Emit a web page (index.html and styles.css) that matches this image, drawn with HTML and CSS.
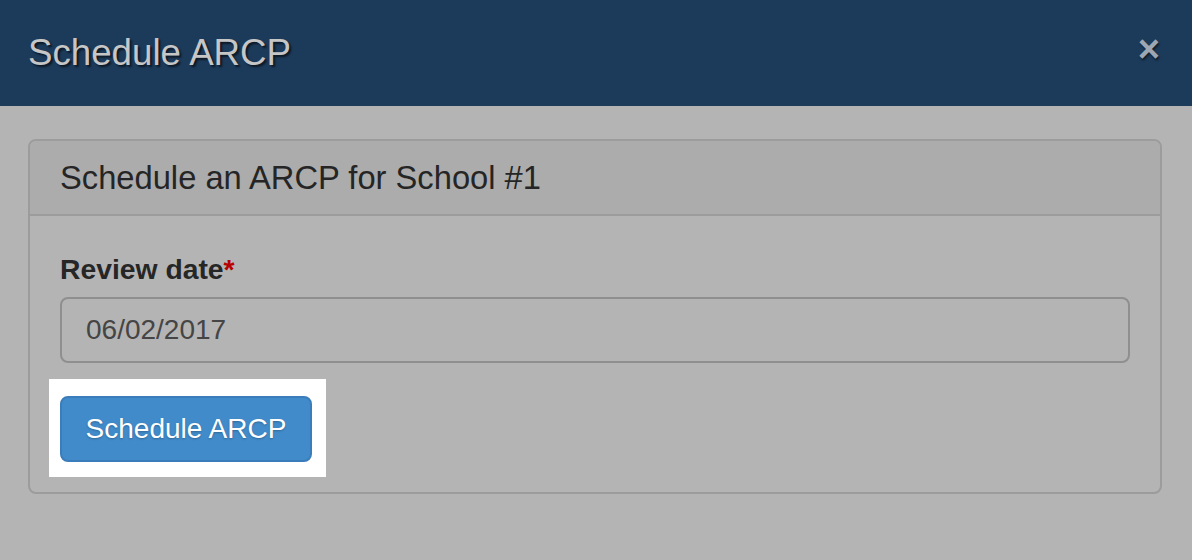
FILE: index.html
```html
<!DOCTYPE html>
<html>
<head>
<meta charset="utf-8">
<link rel="stylesheet" href="styles.css">
</head>
<body>
<div class="modal">
  <div class="modal-header">
    <h1 class="modal-title">Schedule ARCP</h1>
    <span class="close">×</span>
  </div>
  <div class="modal-body">
    <div class="panel">
      <div class="panel-heading">Schedule an ARCP for School #1</div>
      <div class="panel-body">
        <label class="field-label">Review date<span class="req">*</span></label>
        <div class="input">06/02/2017</div>
        <div class="actions">
          <span class="spotlight"><button class="btn">Schedule ARCP</button></span>
        </div>
      </div>
    </div>
  </div>
</div>
</body>
</html>
```
FILE: styles.css
```css
html, body {
  margin: 0;
  padding: 0;
}
body {
  background: #b4b4b4;
  font-family: "Liberation Sans", Arial, sans-serif;
  width: 1192px;
  height: 560px;
  overflow: hidden;
}
.modal-header {
  height: 106px;
  box-sizing: border-box;
  background: #1c3a5a;
  display: flex;
  align-items: center;
  justify-content: space-between;
  padding: 0 32px 0 28px;
}
.modal-title {
  margin: 0;
  font-size: 36.7px;
  font-weight: normal;
  color: #c6c6c6;
  text-shadow: 2px 2px 2px rgba(0,0,0,0.6);
  line-height: 40px;
  position: relative;
  top: 0;
}
.close {
  font-size: 38px;
  font-weight: bold;
  color: #9da6b2;
  text-shadow: 1px 2px 2px rgba(0,0,0,0.5);
  line-height: 40px;
  position: relative;
  top: -4px;
}
.modal-body {
  padding: 33px 30px 0 28px;
}
.panel {
  border: 2px solid #9c9c9c;
  border-radius: 8px;
}
.panel-heading {
  background: #acacac;
  border-bottom: 2px solid #9c9c9c;
  border-radius: 6px 6px 0 0;
  padding: 19px 30px 18px;
  font-size: 32.7px;
  line-height: 36px;
  color: #252525;
}
.panel-body {
  padding: 33px 30px 30px;
}
.field-label {
  display: block;
  font-size: 28.3px;
  font-weight: bold;
  line-height: 40px;
  color: #262626;
}
.req {
  color: #b80000;
}
.input {
  margin-top: 8px;
  height: 66px;
  box-sizing: border-box;
  border: 2px solid #8f8f8f;
  border-radius: 8px;
  padding: 0 24px;
  display: flex;
  align-items: center;
  font-size: 28px;
  color: #454545;
}
.actions {
  margin-top: 33px;
  display: flex;
}
.spotlight {
  position: relative;
  display: inline-flex;
}
.spotlight::before {
  content: "";
  position: absolute;
  top: -17px;
  right: -14px;
  bottom: -15px;
  left: -11px;
  background: #ffffff;
}
.btn {
  position: relative;
  height: 66px;
  width: 252px;
  box-sizing: border-box;
  background: #418bca;
  border: 2px solid #3a7dba;
  border-radius: 8px;
  color: #ffffff;
  font-family: "Liberation Sans", Arial, sans-serif;
  font-size: 28px;
  text-shadow: 0 1px 2px rgba(0,0,0,0.25);
  padding: 0;
}
```
